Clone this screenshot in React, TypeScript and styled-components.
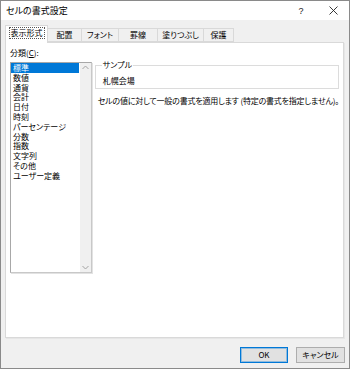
import styled, { createGlobalStyle } from 'styled-components'

const GlobalStyle = createGlobalStyle`
  html, body {
    margin: 0;
    padding: 0;
    background: #fff;
  }
  body {
    font-family: "Noto Sans CJK JP", "Noto Sans", sans-serif;
    font-feature-settings: "palt";
    color: #000;
  }
  * {
    box-sizing: border-box;
  }
`

const Dialog = styled.div`
  width: 350px;
  height: 369px;
  border: 1px solid #8a8a8a;
  background: #f0f0f0;
  display: flex;
  flex-direction: column;
`

const TitleBar = styled.div`
  height: 19px;
  background: #fff;
  display: flex;
  align-items: center;
  padding-left: 5px;
  font-size: 9px;
  line-height: 10px;
`

const Title = styled.span`
  flex: 1;
`

const TitleButton = styled.span`
  width: 32px;
  height: 19px;
  display: flex;
  align-items: center;
  justify-content: center;
  font-family: "Liberation Sans", sans-serif;
  font-size: 9px;
  color: #222;
`

const TabStrip = styled.div`
  margin: 5px 0 0 4px;
  height: 17px;
  display: flex;
  align-items: flex-end;
  position: relative;
  z-index: 1;
`

const Tab = styled.div<{ $w: number; $active?: boolean }>`
  width: ${(p) => p.$w}px;
  height: ${(p) => (p.$active ? 18 : 14)}px;
  margin-bottom: ${(p) => (p.$active ? -1 : 0)}px;
  background: ${(p) => (p.$active ? '#fff' : '#f0f0f0')};
  border: 1px solid #d9d9d9;
  border-bottom: ${(p) => (p.$active ? 'none' : '1px solid #d9d9d9')};
  border-left: ${(p) => (p.$active ? '1px solid #d9d9d9' : 'none')};
  display: flex;
  align-items: center;
  justify-content: center;
  font-size: 8px;
  line-height: 10px;
  padding-bottom: ${(p) => (p.$active ? 3 : 0)}px;
`

const FocusLabel = styled.span`
  outline: 1px dotted #555;
  outline-offset: 0;
  padding: 0 1px;
`

const Panel = styled.div`
  margin: 0 5px 0 4px;
  height: 296px;
  background: #fff;
  border: 1px solid #d9d9d9;
  box-shadow: 1px 1px 0 #e6e6e6;
  display: flex;
  padding: 5px 4px 0 4px;
  gap: 3px;
`

const LeftColumn = styled.div`
  width: 82px;
  display: flex;
  flex-direction: column;
`

const FieldLabel = styled.div`
  font-size: 8px;
  line-height: 10px;
  margin-bottom: 4px;

  u {
    text-decoration: underline;
  }
`

const ListBox = styled.div`
  height: 211px;
  border: 1px solid #a8a8a8;
  border-right-color: #c8c8c8;
  border-bottom-color: #c8c8c8;
  box-shadow: 1px 1px 0 #e2e2e2;
  display: flex;
`

const Items = styled.div`
  flex: 1;
`

const Item = styled.div<{ $selected?: boolean }>`
  height: 9.8px;
  line-height: 9.8px;
  font-size: 8px;
  padding-left: 2px;
  margin-right: 1px;
  white-space: nowrap;
  background: ${(p) => (p.$selected ? '#0078d7' : 'transparent')};
  color: ${(p) => (p.$selected ? '#fff' : '#000')};
`

const ScrollBar = styled.div`
  width: 11px;
  background: #f0f0f0;
  display: flex;
  flex-direction: column;
  justify-content: space-between;
  align-items: center;
  padding: 2px 0;
`

const RightColumn = styled.div`
  flex: 1;
  padding-top: 12px;
`

const Group = styled.fieldset`
  margin: 0;
  border: 1px solid #dcdcdc;
  padding: 6px 6px 2px 7px;
  min-width: 0;
`

const Legend = styled.legend`
  font-size: 8px;
  line-height: 10px;
  padding: 0 1px;
  margin-left: -1px;
`

const SampleText = styled.div`
  font-size: 8px;
  line-height: 10px;
`

const Description = styled.div`
  margin-top: 7px;
  padding-left: 3px;
  font-size: 8px;
  line-height: 10px;
  letter-spacing: -0.2px;
  white-space: nowrap;
`

const Footer = styled.div`
  display: flex;
  justify-content: flex-end;
  gap: 8px;
  padding: 9px 4px 0 0;
`

const Button = styled.button<{ $default?: boolean }>`
  width: ${(p) => (p.$default ? 48 : 49)}px;
  height: 16px;
  margin: 0;
  padding: 0;
  background: #e1e1e1;
  border: 1px solid ${(p) => (p.$default ? '#0078d7' : '#adadad')};
  box-shadow: ${(p) => (p.$default ? 'inset 0 0 0 1px rgba(0, 120, 215, 0.35)' : 'none')};
  font-family: "Noto Sans CJK JP", "Noto Sans", sans-serif;
  font-feature-settings: "palt";
  font-size: 8px;
  line-height: 10px;
  color: #000;
`

const categories = [
  '標準',
  '数値',
  '通貨',
  '会計',
  '日付',
  '時刻',
  'パーセンテージ',
  '分数',
  '指数',
  '文字列',
  'その他',
  'ユーザー定義',
]

const tabs = [
  { label: '表示形式', w: 43 },
  { label: '配置', w: 34 },
  { label: 'フォント', w: 37 },
  { label: '罫線', w: 39 },
  { label: '塗りつぶし', w: 46 },
  { label: '保護', w: 30 },
]

const Chevron = ({ up }: { up?: boolean }) => (
  <svg width="7" height="5" viewBox="0 0 7 5">
    <path
      d={up ? 'M0.5 4 L3.5 1 L6.5 4' : 'M0.5 1 L3.5 4 L6.5 1'}
      fill="none"
      stroke="#a3a3a3"
      strokeWidth="1"
    />
  </svg>
)

export default function App() {
  return (
    <>
      <GlobalStyle />
      <Dialog>
        <TitleBar>
          <Title>セルの書式設定</Title>
          <TitleButton>?</TitleButton>
          <TitleButton>
            <svg width="9" height="9" viewBox="0 0 9 9">
              <path d="M0.5 0.5 L8.5 8.5 M8.5 0.5 L0.5 8.5" stroke="#222" strokeWidth="0.9" />
            </svg>
          </TitleButton>
        </TitleBar>
        <TabStrip>
          {tabs.map((t, i) => (
            <Tab key={t.label} $w={t.w} $active={i === 0}>
              {i === 0 ? <FocusLabel>{t.label}</FocusLabel> : t.label}
            </Tab>
          ))}
        </TabStrip>
        <Panel>
          <LeftColumn>
            <FieldLabel>
              分類(<u>C</u>):
            </FieldLabel>
            <ListBox>
              <Items>
                {categories.map((c, i) => (
                  <Item key={c} $selected={i === 0}>
                    {c}
                  </Item>
                ))}
              </Items>
              <ScrollBar>
                <Chevron up />
                <Chevron />
              </ScrollBar>
            </ListBox>
          </LeftColumn>
          <RightColumn>
            <Group>
              <Legend>サンプル</Legend>
              <SampleText>札幌会場</SampleText>
            </Group>
            <Description>
              セルの値に対して一般の書式を適用します (特定の書式を指定しません)。
            </Description>
          </RightColumn>
        </Panel>
        <Footer>
          <Button $default>OK</Button>
          <Button>キャンセル</Button>
        </Footer>
      </Dialog>
    </>
  )
}
